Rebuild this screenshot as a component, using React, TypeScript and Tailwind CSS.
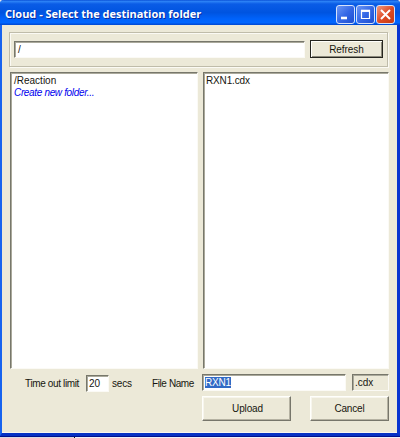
import type { ReactNode } from "react";

const SUNKEN =
  "border border-t-[#77776b] border-l-[#77776b] border-r-[#fbfaf5] border-b-[#fbfaf5] shadow-[inset_1px_1px_0_#aaa99b]";
const RAISED =
  "border border-t-[#fffffb] border-l-[#fffffb] border-r-[#77766b] border-b-[#77766b] shadow-[inset_-1px_-1px_0_#b5b2a2,inset_1px_1px_0_#f7f5ed]";

function CaptionButton({ close = false, children }: { close?: boolean; children: ReactNode }) {
  return (
    <button
      className={
        "flex h-[19px] w-[19px] items-center justify-center rounded-[3px] border border-[#d5e2fb] bg-linear-to-br " +
        (close ? "from-[#f0977c] via-[#df4c25] to-[#c53a12]" : "from-[#6c96f5] via-[#3568e6] to-[#1c4ed0]")
      }
    >
      <svg width="17" height="17" viewBox="0 0 17 17" fill="none" stroke="#fff">
        {children}
      </svg>
    </button>
  );
}

export default function App() {
  return (
    <div className="flex h-[438px] w-[400px] flex-col overflow-hidden bg-[#e4e6ee] font-['Liberation_Sans',Arial,sans-serif] text-[10px] leading-[12px] text-[#16160f]">
      <div className="flex h-[436px] flex-col rounded-t-[4px] border-r-[3px] border-b-[3px] border-l-2 border-r-[#0834d0] border-b-[#0631c4] border-l-[#1763ef] bg-[#ece9d8] shadow-[0_1px_0_#00108c]">
        <header className="-mr-[3px] -ml-[2px] flex h-[25px] shrink-0 items-center rounded-t-[4px] bg-[linear-gradient(#0b52d8_0%,#2a80f5_6%,#0a5ce6_16%,#0054e0_50%,#0062fa_75%,#0066ff_90%,#0046cf_100%)] pt-[3px] pr-[5px] pl-[5px]">
          <h1 className="grow whitespace-nowrap font-['Open_Sans',sans-serif] text-[11px] leading-[16px] font-bold tracking-[-0.01px] text-white [text-shadow:1px_1px_0_#0a2a9c]">
            Cloud - Select the destination folder
          </h1>
          <div className="flex gap-[1px]">
            <CaptionButton>
              <path d="M4 12h6" strokeWidth="2.6" />
            </CaptionButton>
            <CaptionButton>
              <path d="M4 5h9M4.5 4v9M12.5 4v9M4 12.5h9" strokeWidth="1.2" />
              <path d="M4 4.8h9" strokeWidth="2.2" />
            </CaptionButton>
            <CaptionButton close>
              <path d="M4 4l9 9M13 4l-9 9" strokeWidth="2" />
            </CaptionButton>
          </div>
        </header>

        <main className="flex grow flex-col border-b border-[#f7f6ee] pt-[7px] pr-[8px] pl-[7px]">
          <section className="flex h-[35px] w-[379px] shrink-0 items-start border border-[#bfbcaa] pt-[7px] pl-[4px] shadow-[inset_1px_1px_0_#fbfaf4,1px_1px_0_#fbfaf4]">
            <div className={"mt-px mr-[5px] h-[17px] w-[291px] bg-white pt-[2px] pl-[3px] " + SUNKEN}>/</div>
            <button className="h-[18px] w-[73px] border border-[#25251f] text-center leading-[15px] tracking-[-0.05px] shadow-[inset_1px_1px_0_#fffffb,inset_-1px_-1px_0_#8b897b]">
              Refresh
            </button>
          </section>

          <section className="mt-[5px] ml-px flex h-[297px] shrink-0 gap-[5px]">
            <div className={"w-[188px] bg-white pt-[2px] pl-[3px] " + SUNKEN}>
              <p>/Reaction</p>
              <p className="tracking-[-0.34px] text-[#0000ee] italic">Create new folder...</p>
            </div>
            <div className={"w-[186px] bg-white pt-[2px] pl-[2px] tracking-[-0.15px] " + SUNKEN}>RXN1.cdx</div>
          </section>

          <section className="mt-[5px] flex h-[18px] shrink-0 pl-[16px]">
            <span className="w-[61px] pt-[4px] tracking-[-0.36px] whitespace-nowrap">Time out limit</span>
            <div className={"mt-px h-[17px] w-[23px] bg-white pt-[2px] pl-[2px] " + SUNKEN}>20</div>
            <span className="ml-[3px] w-[40px] pt-[4px] tracking-[-0.2px]">secs</span>
            <span className="w-[50px] pt-[4px] tracking-[-0.4px] whitespace-nowrap">File Name</span>
            <div className={"h-[17px] w-[144px] bg-white pt-[2px] pl-[2px] " + SUNKEN}>
              <span className="block h-[11px] w-[26px] bg-[#316ac5] leading-[12px] tracking-[-0.2px] text-white">
                RXN1
              </span>
            </div>
            <div className={"ml-[6px] h-[17px] w-[37px] pt-[2px] pl-[2px] " + SUNKEN}>.cdx</div>
          </section>

          <footer className="mt-[4px] flex shrink-0 gap-[19px] pl-[193px]">
            <button className={"h-[25px] w-[89px] pl-[2px] tracking-[-0.15px] " + RAISED}>Upload</button>
            <button className={"h-[25px] w-[79px] tracking-[-0.15px] " + RAISED}>Cancel</button>
          </footer>
        </main>
      </div>
      <div className="flex h-[2px] pt-px">
        <div className="w-[74px] bg-[#d9dae2]" />
        <div className="w-px bg-[#151515]" />
        <div className="grow bg-[#edf0f7]" />
      </div>
    </div>
  );
}
